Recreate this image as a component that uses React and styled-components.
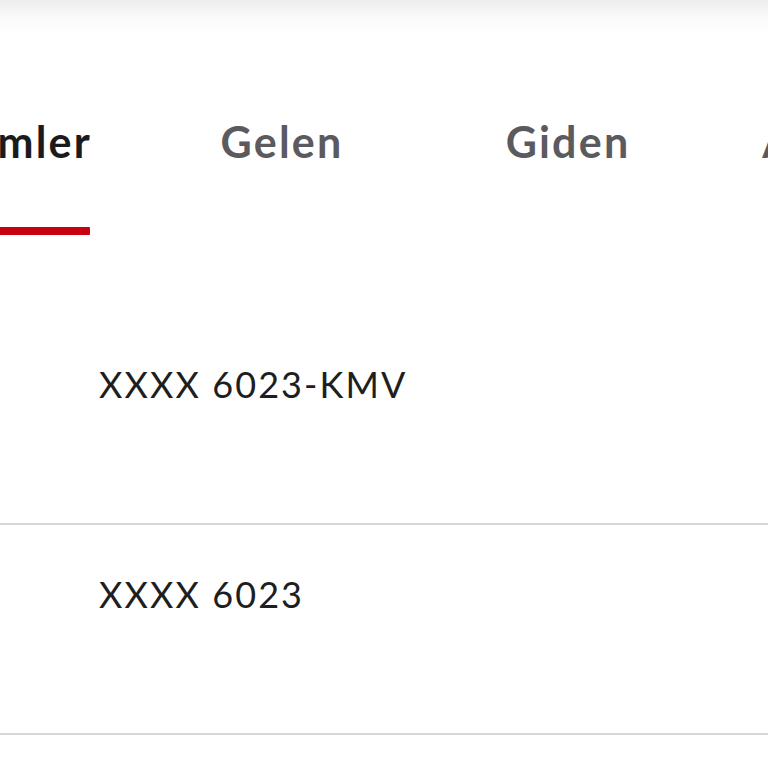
import React from 'react';
import styled, { createGlobalStyle } from 'styled-components';

const GlobalStyle = createGlobalStyle`
  html, body {
    margin: 0;
    padding: 0;
    background: #ffffff;
    overflow: hidden;
  }
  body {
    font-family: Lato, "Open Sans", sans-serif;
  }
`;

const Page = styled.div`
  width: 768px;
  height: 768px;
  overflow: hidden;
  background: #ffffff;
`;

const TopShade = styled.div`
  height: 34px;
  background: linear-gradient(#ededed, #fbfbfb 55%, #ffffff);
`;

const TabBar = styled.nav`
  display: flex;
  margin-left: -123px;
  padding-top: 82px;
  width: max-content;
`;

const Tab = styled.div`
  width: ${(p) => p.$w}px;
  display: flex;
  flex-direction: column;
  align-items: center;
`;

const TabLabel = styled.span`
  display: inline-flex;
  flex-direction: column;
  font-size: 43px;
  font-weight: 700;
  line-height: 52px;
  letter-spacing: 2.2px;
  white-space: nowrap;
  color: ${(p) => (p.$active ? '#1b1b1d' : '#5b5a5f')};

  &::after {
    content: '';
    height: 8px;
    margin-top: 59px;
    margin-right: 2px;
    border-radius: 1px;
    background: ${(p) => (p.$active ? '#c9000f' : 'transparent')};
  }
`;

const List = styled.div`
  margin-top: 80px;
`;

const Row = styled.div`
  padding: 48px 0 117px 99px;
  border-bottom: 2px solid #d6d6d6;
`;

const CardNo = styled.div`
  font-size: 36px;
  line-height: 43px;
  color: #1e1e20;
  letter-spacing: 2.1px;
`;

const tabs = [
  { label: 'İşlemler', w: 262 },
  { label: 'Gelen', w: 286 },
  { label: 'Giden', w: 286 },
  { label: 'Arşivlenen', w: 328 },
];
const cards = ['XXXX 6023-KMV', 'XXXX 6023'];

export default function App() {
  return (
    <Page>
      <GlobalStyle />
      <TopShade />
      <TabBar>
        {tabs.map((t, i) => (
          <Tab key={t.label} $w={t.w}>
            <TabLabel $active={i === 0}>{t.label}</TabLabel>
          </Tab>
        ))}
      </TabBar>
      <List>
        {cards.map((c) => (
          <Row key={c}>
            <CardNo>{c}</CardNo>
          </Row>
        ))}
      </List>
    </Page>
  );
}
